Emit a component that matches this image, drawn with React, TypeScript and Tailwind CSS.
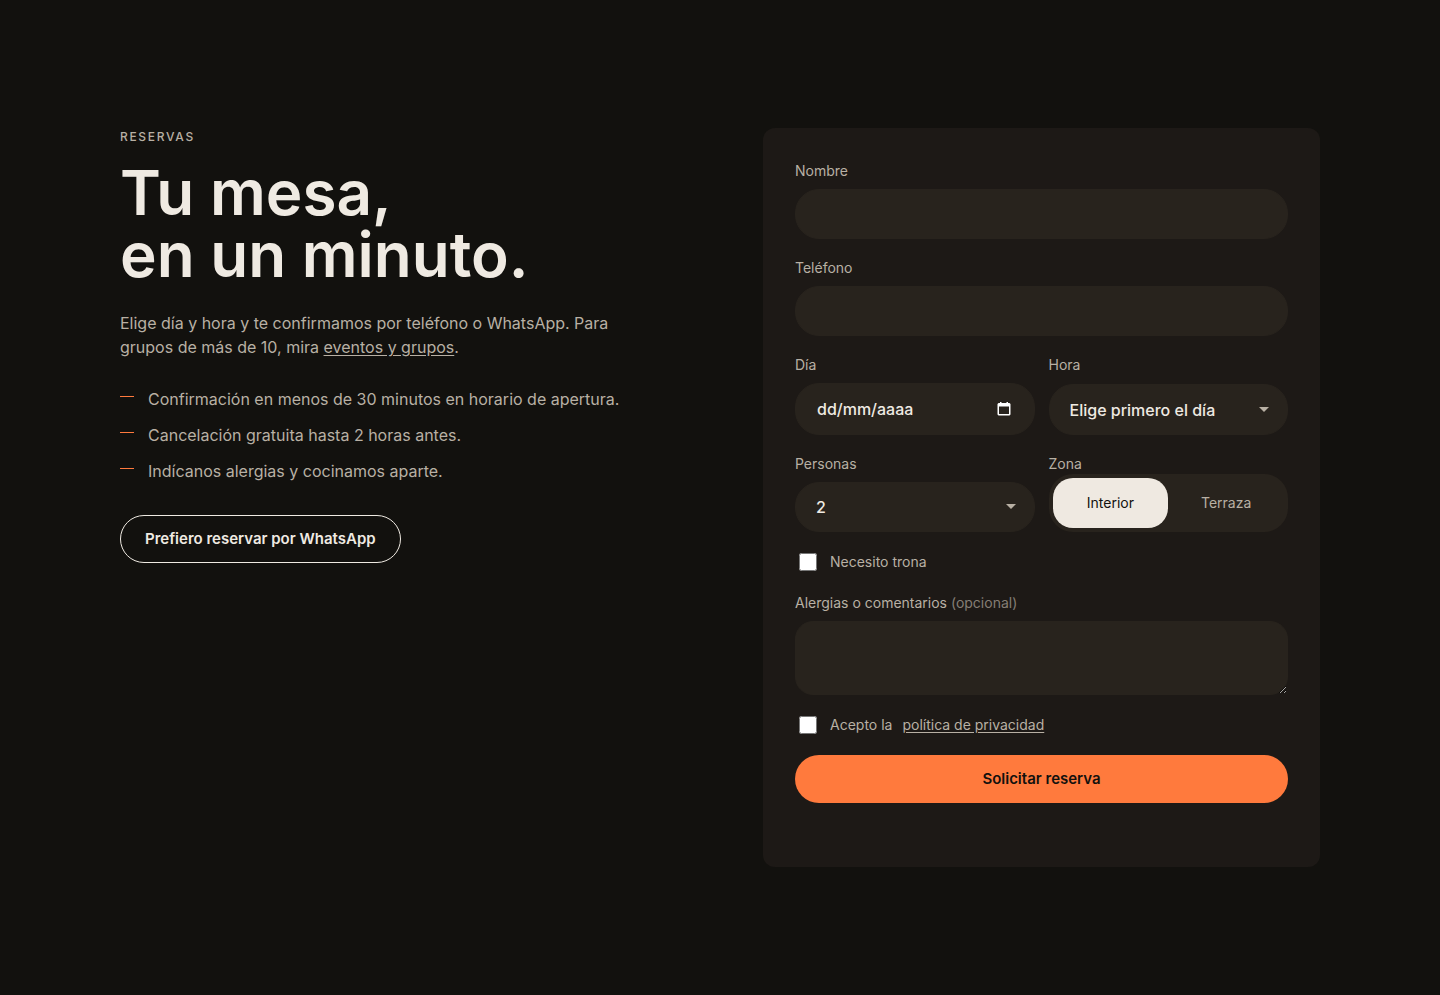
import { ReactNode, useState } from "react";

const PERKS = [
  "Confirmación en menos de 30 minutos en horario de apertura.",
  "Cancelación gratuita hasta 2 horas antes.",
  "Indícanos alergias y cocinamos aparte.",
];

const ZONES = ["Interior", "Terraza"];

const control =
  "w-full border border-[#28231d] bg-[#28231d] text-base font-medium text-[#efeae2] outline-none focus:border-[#ff7a3d]";

function Field({ id, label, children }: { id: string; label: ReactNode; children: ReactNode }) {
  return (
    <div className="grid gap-2">
      <label htmlFor={id} className="text-sm leading-[21px] text-[#b8b0a4]">
        {label}
      </label>
      {children}
    </div>
  );
}

function Select({ id, children }: { id: string; children: ReactNode }) {
  return (
    <div className="relative flex">
      <select id={id} className={`${control} min-h-[50px] appearance-none rounded-3xl px-5`}>
        {children}
      </select>
      <svg
        viewBox="0 0 10 5"
        className="pointer-events-none absolute top-1/2 right-[19px] -mt-[3px] h-[5px] w-[10px] fill-[#b8b0a4]"
        aria-hidden="true"
      >
        <path d="M0 0h10L5 5z" />
      </svg>
    </div>
  );
}

function Check({ children }: { children: ReactNode }) {
  return (
    <label className="flex min-h-6 items-center gap-[10px] pb-px text-sm leading-[21px] text-[#b8b0a4]">
      <input type="checkbox" className="mr-[3px] ml-1 size-[18px] accent-[#ff7a3d]" />
      {children}
    </label>
  );
}

function Intro() {
  return (
    <div>
      <p className="text-xs leading-[18px] font-medium tracking-[0.14em] text-[#b8b0a4] uppercase">Reservas</p>
      <h1 className="mt-4 text-[62px] leading-[62px] font-semibold text-[#efeae2]">
        Tu mesa,
        <br />
        en un minuto.
      </h1>
      <p className="mt-[25px] max-w-[500px] text-base leading-6 text-[#b8b0a4]">
        Elige día y hora y te confirmamos por teléfono o WhatsApp. Para grupos de más de 10, mira{" "}
        <a href="#eventos" className="underline underline-offset-2">
          eventos y grupos
        </a>
        .
      </p>
      <ul className="mt-7 grid gap-3 text-base leading-6 text-[#b8b0a4]">
        {PERKS.map((perk) => (
          <li key={perk} className="flex gap-[14px]">
            <span className="mt-[9px] h-px w-[14px] shrink-0 bg-[#ff7a3d]" />
            {perk}
          </li>
        ))}
      </ul>
      <a
        href="#whatsapp"
        className="mt-8 inline-flex h-12 items-center rounded-full border border-[#efeae2] px-6 text-[15px] font-semibold text-[#efeae2]"
      >
        Prefiero reservar por WhatsApp
      </a>
    </div>
  );
}

function BookingForm() {
  const [zone, setZone] = useState("Interior");

  return (
    <form className="grid gap-[18px] rounded-xl bg-[#1d1916] p-8 pb-16" onSubmit={(e) => e.preventDefault()}>
      <Field id="nombre" label="Nombre">
        <input id="nombre" type="text" autoComplete="name" className={`${control} h-[50px] rounded-3xl px-5`} />
      </Field>
      <Field id="telefono" label="Teléfono">
        <input id="telefono" type="tel" autoComplete="tel" className={`${control} h-[50px] rounded-3xl px-5`} />
      </Field>

      <div className="grid grid-cols-2 gap-[14px]">
        <Field id="dia" label="Día">
          <div className="relative">
            <input
              id="dia"
              type="text"
              placeholder="dd/mm/aaaa"
              className={`${control} h-[52px] rounded-3xl px-[21px] placeholder:text-[#efeae2]`}
            />
            <svg
              viewBox="0 0 16 16"
              className="pointer-events-none absolute top-[18px] right-[23px] size-4 fill-white"
              aria-hidden="true"
            >
              <path
                fillRule="evenodd"
                d="M4 1h1.500v1h5V1H12v1h1.500l1 1v10.500l-1 1h-11l-1-1V3l1-1H4zM3 5.500V13h10V5.500z"
              />
            </svg>
          </div>
        </Field>
        <Field id="hora" label="Hora">
          <Select id="hora">
            <option>Elige primero el día</option>
          </Select>
        </Field>
      </div>

      <div className="grid grid-cols-2 gap-[14px]">
        <Field id="personas" label="Personas">
          <Select id="personas">
            <option>2</option>
            <option>3</option>
            <option>4</option>
            <option>5</option>
            <option>6</option>
          </Select>
        </Field>
        <fieldset>
          <legend className="text-sm leading-[21px] text-[#b8b0a4]">Zona</legend>
          <div className="grid grid-cols-2 rounded-3xl bg-[#28231d] p-1">
            {ZONES.map((name) => (
              <label
                key={name}
                className="flex h-[50px] cursor-pointer items-center justify-center rounded-[20px] text-sm text-[#b8b0a4] has-checked:bg-[#efe9e1] has-checked:text-[#12110e]"
              >
                <input
                  type="radio"
                  name="zona"
                  className="sr-only"
                  checked={zone === name}
                  onChange={() => setZone(name)}
                />
                {name}
              </label>
            ))}
          </div>
        </fieldset>
      </div>

      <Check>Necesito trona</Check>

      <Field
        id="comentarios"
        label={
          <>
            Alergias o comentarios <span className="text-[#857e75]">(opcional)</span>
          </>
        }
      >
        <textarea id="comentarios" className={`${control} h-[74px] resize-y rounded-[18px] px-5 py-3`} />
      </Field>

      <Check>
        Acepto la
        <a href="#privacidad" className="underline underline-offset-2">
          política de privacidad
        </a>
      </Check>

      <button
        type="submit"
        className="h-12 rounded-full bg-[#ff7a3d] text-[15px] font-semibold text-[#12110e]"
      >
        Solicitar reserva
      </button>
    </form>
  );
}

export default function App() {
  return (
    <main className="min-h-screen bg-[#12110e] px-6 py-32 font-['Inter',sans-serif]">
      <div className="mx-auto grid max-w-[1200px] items-start gap-12 md:grid-cols-2 lg:gap-[86px]">
        <Intro />
        <BookingForm />
      </div>
    </main>
  );
}
